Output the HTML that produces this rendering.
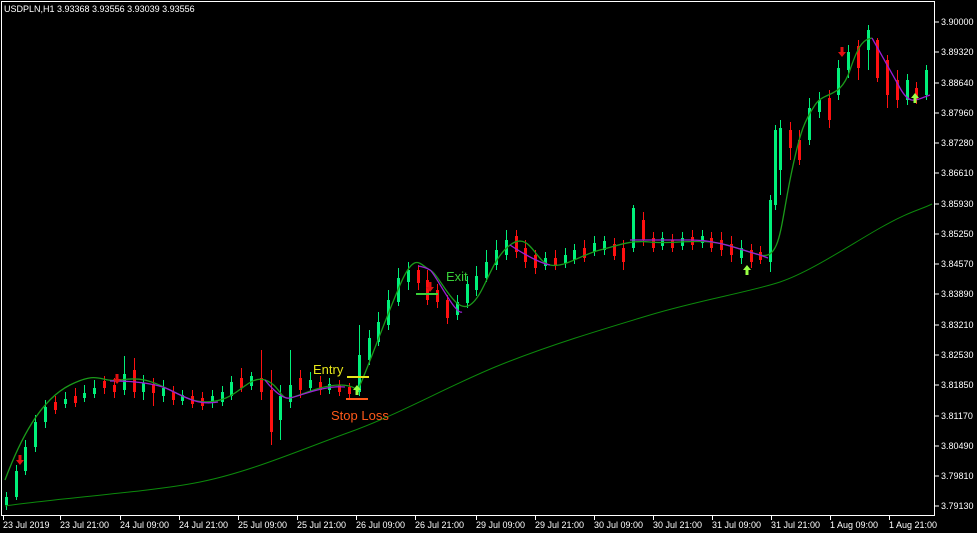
<!DOCTYPE html>
<html><head><meta charset="utf-8"><style>
html,body{margin:0;padding:0;background:#000;width:977px;height:533px;overflow:hidden}
svg{display:block}
text{font-family:"Liberation Sans",sans-serif}
</style></head><body>
<svg width="977" height="533" xmlns="http://www.w3.org/2000/svg">
<rect width="977" height="533" fill="#000"/>
<rect x="1.5" y="1.5" width="933" height="514" fill="none" stroke="#fff" stroke-width="1"/>
<path fill="none" stroke="#00f07a" stroke-width="1" d="M6.5 492V510M16.5 465V500M25.5 440V475M35.5 415V452M45.5 400V428M65.5 392V408M84.5 385V402M94.5 380V398M124.5 356V395M143.5 375V400M163.5 380V402M182.5 390V405M212.5 390V408M222.5 386V406M231.5 376V400M251.5 372V390M280.5 385V440M290.5 350V408M310.5 372V392M329.5 378V394M359.5 325V396M369.5 330V365M378.5 312V346M388.5 290V330M398.5 268V306M408.5 262V290M457.5 295V320M467.5 276V308M476.5 266V296M486.5 250V282M496.5 240V270M506.5 230V260M545.5 252V270M565.5 248V268M574.5 244V264M594.5 236V256M604.5 236V255M633.5 205V252M662.5 232V250M682.5 232V250M702.5 230V248M741.5 240V264M770.5 195V272M775.5 125V210M780.5 120V195M809.5 98V145M819.5 92V118M838.5 60V100M848.5 45V78M868.5 25V70M907.5 74V105M926.5 65V100"/>
<path fill="none" stroke="#00f07a" stroke-width="3" d="M6.5 497V505M16.5 471V497M25.5 447V471M35.5 422V447M45.5 407V422M65.5 399V404M84.5 393V398M94.5 388V394M124.5 374V390M143.5 383V392M163.5 388V396M182.5 395V401M212.5 396V403M222.5 392V402M231.5 382V396M251.5 376V386M280.5 396V420M290.5 385V402M310.5 380V388M329.5 384V390M359.5 355V392M369.5 338V360M378.5 322V342M388.5 300V325M398.5 278V302M408.5 270V282M457.5 302V315M467.5 284V303M476.5 276V290M486.5 262V278M496.5 250V265M506.5 240V255M545.5 258V266M565.5 255V263M574.5 250V260M594.5 243V252M604.5 241V250M633.5 208V248M662.5 238V246M682.5 238V246M702.5 236V243M741.5 248V258M770.5 200V262M775.5 130V205M780.5 128V170M809.5 108V140M819.5 100V112M838.5 68V95M848.5 52V70M868.5 30V50M907.5 80V100M926.5 70V95"/>
<path fill="none" stroke="#ff1010" stroke-width="1" d="M55.5 396V414M75.5 388V407M104.5 376V394M114.5 378V398M134.5 358V398M153.5 378V406M173.5 386V405M192.5 390V408M202.5 392V410M241.5 368V392M261.5 350V400M271.5 370V445M300.5 370V398M320.5 376V395M339.5 380V396M349.5 383V398M418.5 265V290M427.5 270V305M437.5 284V308M447.5 295V324M516.5 230V258M525.5 240V268M535.5 250V274M555.5 250V270M584.5 240V262M614.5 238V260M623.5 240V270M643.5 212V246M653.5 232V252M672.5 234V252M692.5 230V250M711.5 232V252M721.5 232V256M731.5 236V262M751.5 244V268M760.5 246V264M790.5 122V160M799.5 130V165M829.5 90V128M858.5 40V80M877.5 38V82M887.5 55V108M897.5 70V108M916.5 82V104"/>
<path fill="none" stroke="#ff1010" stroke-width="3" d="M55.5 402V410M75.5 396V403M104.5 381V388M114.5 385V392M134.5 370V392M153.5 384V393M173.5 392V400M192.5 396V404M202.5 398V406M241.5 378V388M261.5 378V392M271.5 390V432M300.5 378V390M320.5 382V390M339.5 385V392M349.5 387V394M418.5 270V283M427.5 280V300M437.5 290V302M447.5 300V318M516.5 236V252M525.5 248V262M535.5 255V268M555.5 258V266M584.5 248V258M614.5 244V256M623.5 248V262M643.5 220V240M653.5 238V248M672.5 240V248M692.5 237V245M711.5 238V248M721.5 240V250M731.5 244V255M751.5 250V262M760.5 252V260M790.5 130V148M799.5 140V160M829.5 98V120M858.5 46V68M877.5 40V78M887.5 60V95M897.5 80V100M916.5 88V100"/>
<path fill="none" stroke="#0c8a0c" stroke-width="1" d="M5,506 C60,498 150,492 200,482 S300,450 350,432 S450,385 500,365 S600,330 650,315 S750,292 780,282 S850,245 880,228 S920,210 932,204"/>
<path fill="none" stroke="#1a9a1a" stroke-width="1.3" d="M5,480 C20,440 40,400 70,385 S100,383 120,380 S150,380 170,390 S200,405 220,400 S250,375 265,380 S280,400 290,398 S320,385 340,385 S355,395 360,385 S385,320 400,285 S420,265 430,270 S455,315 470,305 S490,260 510,245 S535,262 550,265 S580,255 600,250 S630,240 650,242 S690,240 710,242 S740,250 760,255 S780,230 790,180 S805,120 815,105 S840,100 850,70 S865,40 872,38"/>
<path fill="none" stroke="#9b1fd6" stroke-width="1.3" d="M110,381 S150,380 170,390 S200,405 218,402 M265,380 S280,400 290,398 S325,385 345,387 M418,266 S425,267 430,270 S455,315 462,312 M510,245 S535,262 550,265 M630,240 S660,240 690,240 S740,250 760,255 L768,258 M872,38 S890,70 900,88 S915,100 930,95"/>
<g fill="#fff" font-size="9">
<text x="941" y="25">3.90000</text><text x="941" y="55">3.89320</text><text x="941" y="86">3.88640</text><text x="941" y="116">3.87960</text><text x="941" y="146">3.87280</text><text x="941" y="176">3.86610</text><text x="941" y="207">3.85930</text><text x="941" y="237">3.85250</text><text x="941" y="267">3.84570</text><text x="941" y="297">3.83890</text><text x="941" y="328">3.83210</text><text x="941" y="358">3.82530</text><text x="941" y="388">3.81850</text><text x="941" y="419">3.81170</text><text x="941" y="449">3.80490</text><text x="941" y="479">3.79810</text><text x="941" y="509">3.79130</text>
<text x="3" y="528">23 Jul 2019</text><text x="60" y="528">23 Jul 21:00</text><text x="120" y="528">24 Jul 09:00</text><text x="179" y="528">24 Jul 21:00</text><text x="238" y="528">25 Jul 09:00</text><text x="297" y="528">25 Jul 21:00</text><text x="356" y="528">26 Jul 09:00</text><text x="415" y="528">26 Jul 21:00</text><text x="476" y="528">29 Jul 09:00</text><text x="535" y="528">29 Jul 21:00</text><text x="594" y="528">30 Jul 09:00</text><text x="653" y="528">30 Jul 21:00</text><text x="712" y="528">31 Jul 09:00</text><text x="771" y="528">31 Jul 21:00</text><text x="830" y="528">1 Aug 09:00</text><text x="889" y="528">1 Aug 21:00</text>
<text x="4" y="12">USDPLN,H1  3.93368 3.93556 3.93039 3.93556</text>
</g>
<path stroke="#fff" d="M935 22h4M935 52h4M935 83h4M935 113h4M935 143h4M935 173h4M935 204h4M935 234h4M935 264h4M935 294h4M935 325h4M935 355h4M935 385h4M935 416h4M935 446h4M935 476h4M935 506h4M3.5 516v4M60.5 516v4M120.5 516v4M179.5 516v4M238.5 516v4M297.5 516v4M356.5 516v4M415.5 516v4M476.5 516v4M535.5 516v4M594.5 516v4M653.5 516v4M712.5 516v4M771.5 516v4M830.5 516v4M889.5 516v4"/>
<line x1="347" y1="377" x2="369" y2="377" stroke="#e6e61a" stroke-width="2"/>
<line x1="346" y1="399" x2="368" y2="399" stroke="#ff5a1a" stroke-width="2"/>
<line x1="416" y1="294" x2="438" y2="294" stroke="#38d038" stroke-width="2"/>
<text x="313" y="374" fill="#e6e61a" font-size="13">Entry</text>
<text x="331" y="420" fill="#ff5a1a" font-size="13">Stop Loss</text>
<text x="446" y="281" fill="#38d038" font-size="13">Exit</text>
<g fill="#9f4">
<path d="M353,390 l4,-5 l4,5 h-2.5 v5 h-3 v-5z"/>
<path d="M743,270 l4,-5 l4,5 h-2.5 v5 h-3 v-5z"/>
<path d="M911,98 l4,-5 l4,5 h-2.5 v5 h-3 v-5z"/>
</g>
<g fill="#e01010">
<path d="M16,460 l4,5 l4,-5 h-2.5 v-5 h-3 v5z"/>
<path d="M113,379 l4,5 l4,-5 h-2.5 v-5 h-3 v5z"/>
<path d="M426,287 l4,5 l4,-5 h-2.5 v-5 h-3 v5z"/>
<path d="M838,52 l4,5 l4,-5 h-2.5 v-5 h-3 v5z"/>
</g>
</svg>
</body></html>
